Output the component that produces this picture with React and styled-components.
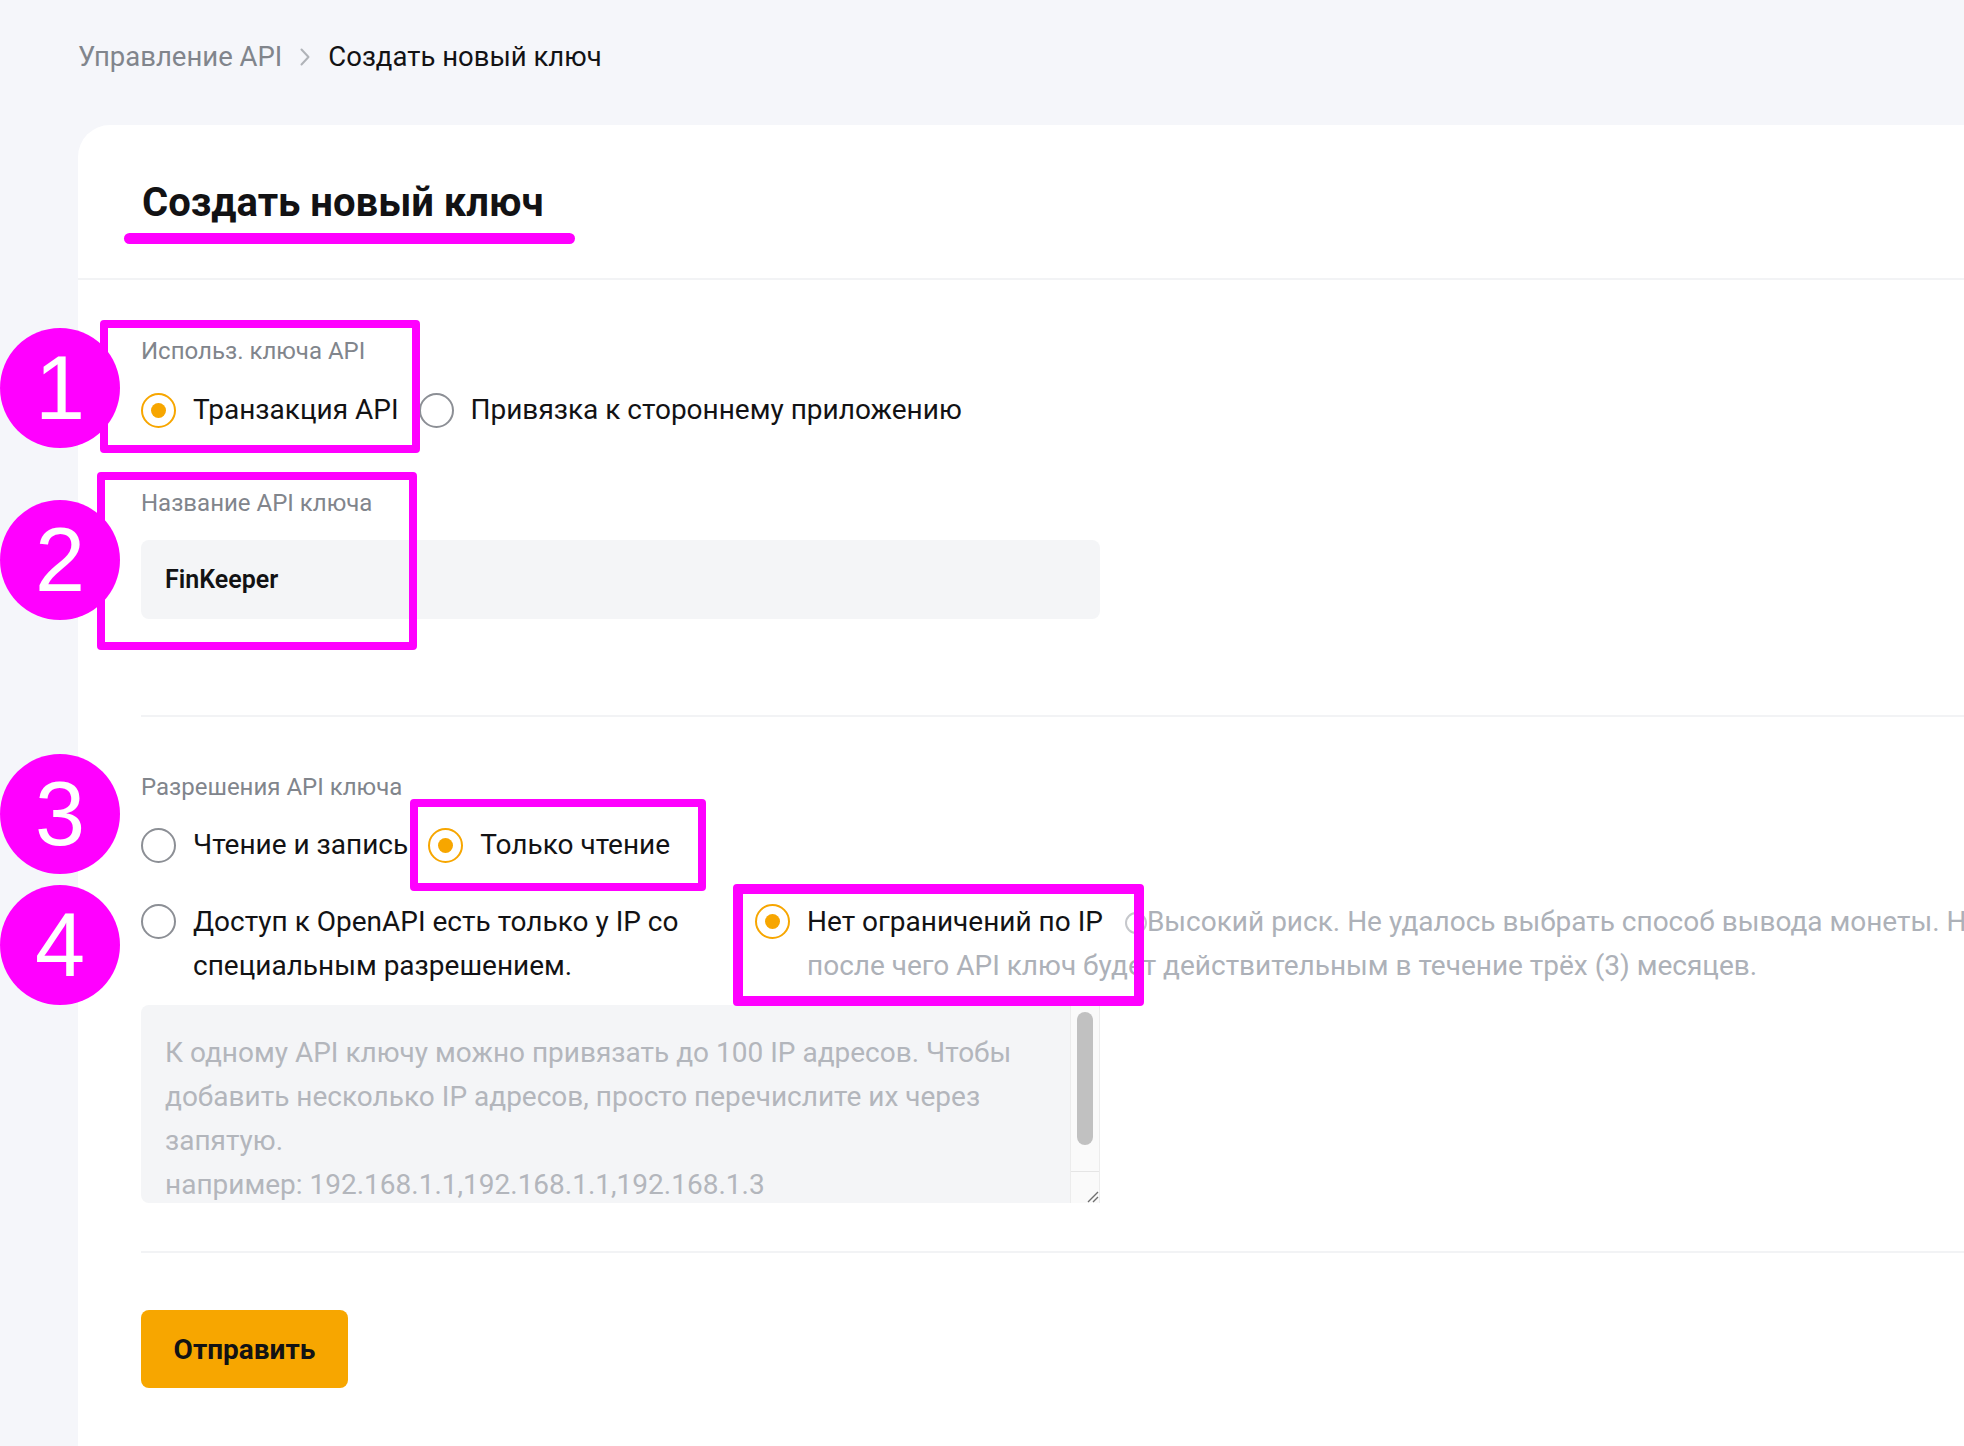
import React from "react"
import styled, { createGlobalStyle } from "styled-components"

const GlobalStyle = createGlobalStyle`
  html, body {
    margin: 0;
    padding: 0;
    background: #f5f6fa;
    overflow: hidden;
  }
  body {
    font-family: Roboto, "Noto Sans", Arial, sans-serif;
    color: #121214;
  }
`

const ORANGE = "#f7a600"
const PINK = "#ff00ff"

const Page = styled.div`
  position: relative;
  width: 1964px;
  height: 1446px;
  overflow: hidden;
  box-sizing: border-box;
  padding-left: 78px;
  display: flex;
  flex-direction: column;
`

const Crumbs = styled.nav`
  display: flex;
  align-items: center;
  gap: 18px;
  height: 36px;
  margin: 39px 0 50px;
  font-size: 27.5px;
  line-height: 36px;
`

const Crumb = styled.span`
  color: ${p => (p.$current ? "#121214" : "#81858c")};
`

const Card = styled.main`
  flex: 1;
  background: #fff;
  border-top-left-radius: 32px;
  display: flex;
  flex-direction: column;
`

const CardHead = styled.header`
  height: 155px;
  box-sizing: border-box;
  padding: 54px 0 0 64px;
  border-bottom: 2px solid #f2f3f5;
`

const Title = styled.h1`
  margin: 0;
  font-size: 40px;
  line-height: 48px;
  font-weight: 700;
  color: #121214;
`

const CardBody = styled.div`
  padding-left: 63px;
  display: flex;
  flex-direction: column;
  align-items: flex-start;
`

const Label = styled.div`
  margin-top: ${p => p.$gap}px;
  font-size: 24px;
  line-height: 30px;
  color: #81858c;
`

const RadioRow = styled.div`
  display: flex;
  align-items: ${p => (p.$top ? "flex-start" : "center")};
  gap: 20px;
  margin-top: ${p => p.$gap}px;
  font-size: 28px;
  line-height: 44px;
  white-space: nowrap;
`

const Option = styled.label`
  display: flex;
  align-items: ${p => (p.$top ? "flex-start" : "center")};
  gap: 17px;
  width: ${p => (p.$width ? `${p.$width}px` : "auto")};
  flex-shrink: 0;
`

const Dot = styled.span`
  width: 35px;
  height: 35px;
  box-sizing: border-box;
  flex-shrink: 0;
  border-radius: 50%;
  border: 2px solid ${p => (p.$on ? ORANGE : "#8c8f95")};
  display: flex;
  align-items: center;
  justify-content: center;
  margin-top: ${p => (p.$top ? "4px" : "0")};

  &::after {
    content: "";
    width: 15px;
    height: 15px;
    border-radius: 50%;
    background: ${p => (p.$on ? ORANGE : "transparent")};
  }
`

const OptionText = styled.span`
  color: #121214;
`

const InfoRing = styled.span`
  display: inline-block;
  width: 22px;
  height: 22px;
  box-sizing: border-box;
  border: 2px solid #c6c8cc;
  border-radius: 50%;
  margin-left: 22px;
  vertical-align: -3px;
`

const Muted = styled.span`
  color: #adb1b8;
`

const Input = styled.div`
  margin-top: 22px;
  width: 959px;
  height: 79px;
  box-sizing: border-box;
  padding-left: 24px;
  border-radius: 8px;
  background: #f4f5f7;
  display: flex;
  align-items: center;
  font-size: 25px;
  font-weight: 600;
  color: #121214;
`

const Divider = styled.hr`
  align-self: stretch;
  margin: ${p => p.$gap}px 0 0;
  border: 0;
  height: 2px;
  background: #f2f3f5;
`

const TextBox = styled.div`
  margin-top: 17px;
  width: 959px;
  height: 198px;
  border-radius: 8px 0 0 8px;
  background: #f4f5f7;
  display: flex;
  overflow: hidden;
`

const Placeholder = styled.div`
  flex: 1;
  padding: 26px 24px 0;
  font-size: 28px;
  line-height: 44px;
  color: #b3b6bc;
  white-space: pre-line;
`

const ScrollTrack = styled.div`
  width: 30px;
  box-sizing: border-box;
  background: #fafafa;
  border-left: 1px solid #ececec;
  border-right: 1px solid #ececec;
  display: flex;
  flex-direction: column;
`

const Thumb = styled.div`
  margin: 7px 0 0 6px;
  width: 16px;
  height: 133px;
  border-radius: 8px;
  background: #c1c1c1;
`

const Grip = styled.div`
  margin-top: auto;
  height: 31px;
  border-top: 1px solid #e5e5e5;
  display: flex;
  align-items: flex-end;
  justify-content: flex-end;
`

const Submit = styled.button`
  margin-top: 57px;
  width: 207px;
  height: 78px;
  border: 0;
  border-radius: 8px;
  background: ${ORANGE};
  font-family: inherit;
  font-size: 28px;
  font-weight: 700;
  color: #121214;
  cursor: pointer;
`

/* annotation layer painted over the page */

const Marker = styled.div`
  position: absolute;
  left: 0;
  top: ${p => p.$y}px;
  width: 120px;
  height: 120px;
  border-radius: 50%;
  background: ${PINK};
  color: #fff;
  font-family: "Liberation Sans", Arial, sans-serif;
  font-size: 90px;
  line-height: 1;
  display: flex;
  align-items: center;
  justify-content: center;
`

const Frame = styled.div`
  position: absolute;
  left: ${p => p.$x}px;
  top: ${p => p.$y}px;
  width: ${p => p.$w}px;
  height: ${p => p.$h}px;
  box-sizing: border-box;
  border: ${p => p.$t || 8}px solid ${PINK};
  border-radius: 4px;
`

const Underline = styled.div`
  position: absolute;
  left: 124px;
  top: 233px;
  width: 451px;
  height: 11px;
  border-radius: 6px;
  background: ${PINK};
`

const Radio = ({ on, top, width, children }) => (
  <Option $top={top} $width={width}>
    <Dot $on={on} $top={top} />
    <OptionText>{children}</OptionText>
  </Option>
)

const Chevron = () => (
  <svg width="10" height="18" viewBox="0 0 10 18" fill="none">
    <path d="M1.5 1.5L8.5 9L1.5 16.5" stroke="#b0b3b8" strokeWidth="2" strokeLinecap="round" strokeLinejoin="round" />
  </svg>
)

const ResizeIcon = () => (
  <svg width="14" height="14" viewBox="0 0 14 14">
    <path d="M13 3L3 13M13 8L8 13" stroke="#6f6f6f" strokeWidth="1.4" />
  </svg>
)

const frames = [
  { x: 100, y: 320, w: 320, h: 133 },
  { x: 97, y: 472, w: 320, h: 178 },
  { x: 410, y: 799, w: 296, h: 92 },
  { x: 733, y: 884, w: 411, h: 122, t: 10 },
]

const markers = [
  { n: 1, y: 328 },
  { n: 2, y: 500 },
  { n: 3, y: 754 },
  { n: 4, y: 885 },
]

export default function App() {
  return (
    <>
      <GlobalStyle />
      <Page>
        <Crumbs>
          <Crumb>Управление API</Crumb>
          <Chevron />
          <Crumb $current>Создать новый ключ</Crumb>
        </Crumbs>

        <Card>
          <CardHead>
            <Title>Создать новый ключ</Title>
          </CardHead>

          <CardBody>
            <Label $gap={56}>Использ. ключа API</Label>
            <RadioRow $gap={22}>
              <Radio on>Транзакция API</Radio>
              <Radio>Привязка к стороннему приложению</Radio>
            </RadioRow>

            <Label $gap={56}>Название API ключа</Label>
            <Input>FinKeeper</Input>

            <Divider $gap={96} />

            <Label $gap={55}>Разрешения API ключа</Label>
            <RadioRow $gap={21}>
              <Radio>Чтение и запись</Radio>
              <Radio on>Только чтение</Radio>
            </RadioRow>

            <RadioRow $gap={33} $top>
              <Radio top width={594}>
                Доступ к OpenAPI есть только у IP со
                <br />
                специальным разрешением.
              </Radio>
              <Radio top on>
                Нет ограничений по IP
                <InfoRing />
                <Muted>
                  Высокий риск. Не удалось выбрать способ вывода монеты. Необходимо подтвердить настройки,
                  <br />
                  после чего API ключ будет действительным в течение трёх (3) месяцев.
                </Muted>
              </Radio>
            </RadioRow>

            <TextBox>
              <Placeholder>
                {"К одному API ключу можно привязать до 100 IP адресов. Чтобы\nдобавить несколько IP адресов, просто перечислите их через\nзапятую.\nнапример: 192.168.1.1,192.168.1.1,192.168.1.3"}
              </Placeholder>
              <ScrollTrack>
                <Thumb />
                <Grip>
                  <ResizeIcon />
                </Grip>
              </ScrollTrack>
            </TextBox>

            <Divider $gap={48} />

            <Submit>Отправить</Submit>
          </CardBody>
        </Card>

        <Underline />
        {frames.map((f, i) => (
          <Frame key={i} $x={f.x} $y={f.y} $w={f.w} $h={f.h} $t={f.t} />
        ))}
        {markers.map(m => (
          <Marker key={m.n} $y={m.y}>{m.n}</Marker>
        ))}
      </Page>
    </>
  )
}
